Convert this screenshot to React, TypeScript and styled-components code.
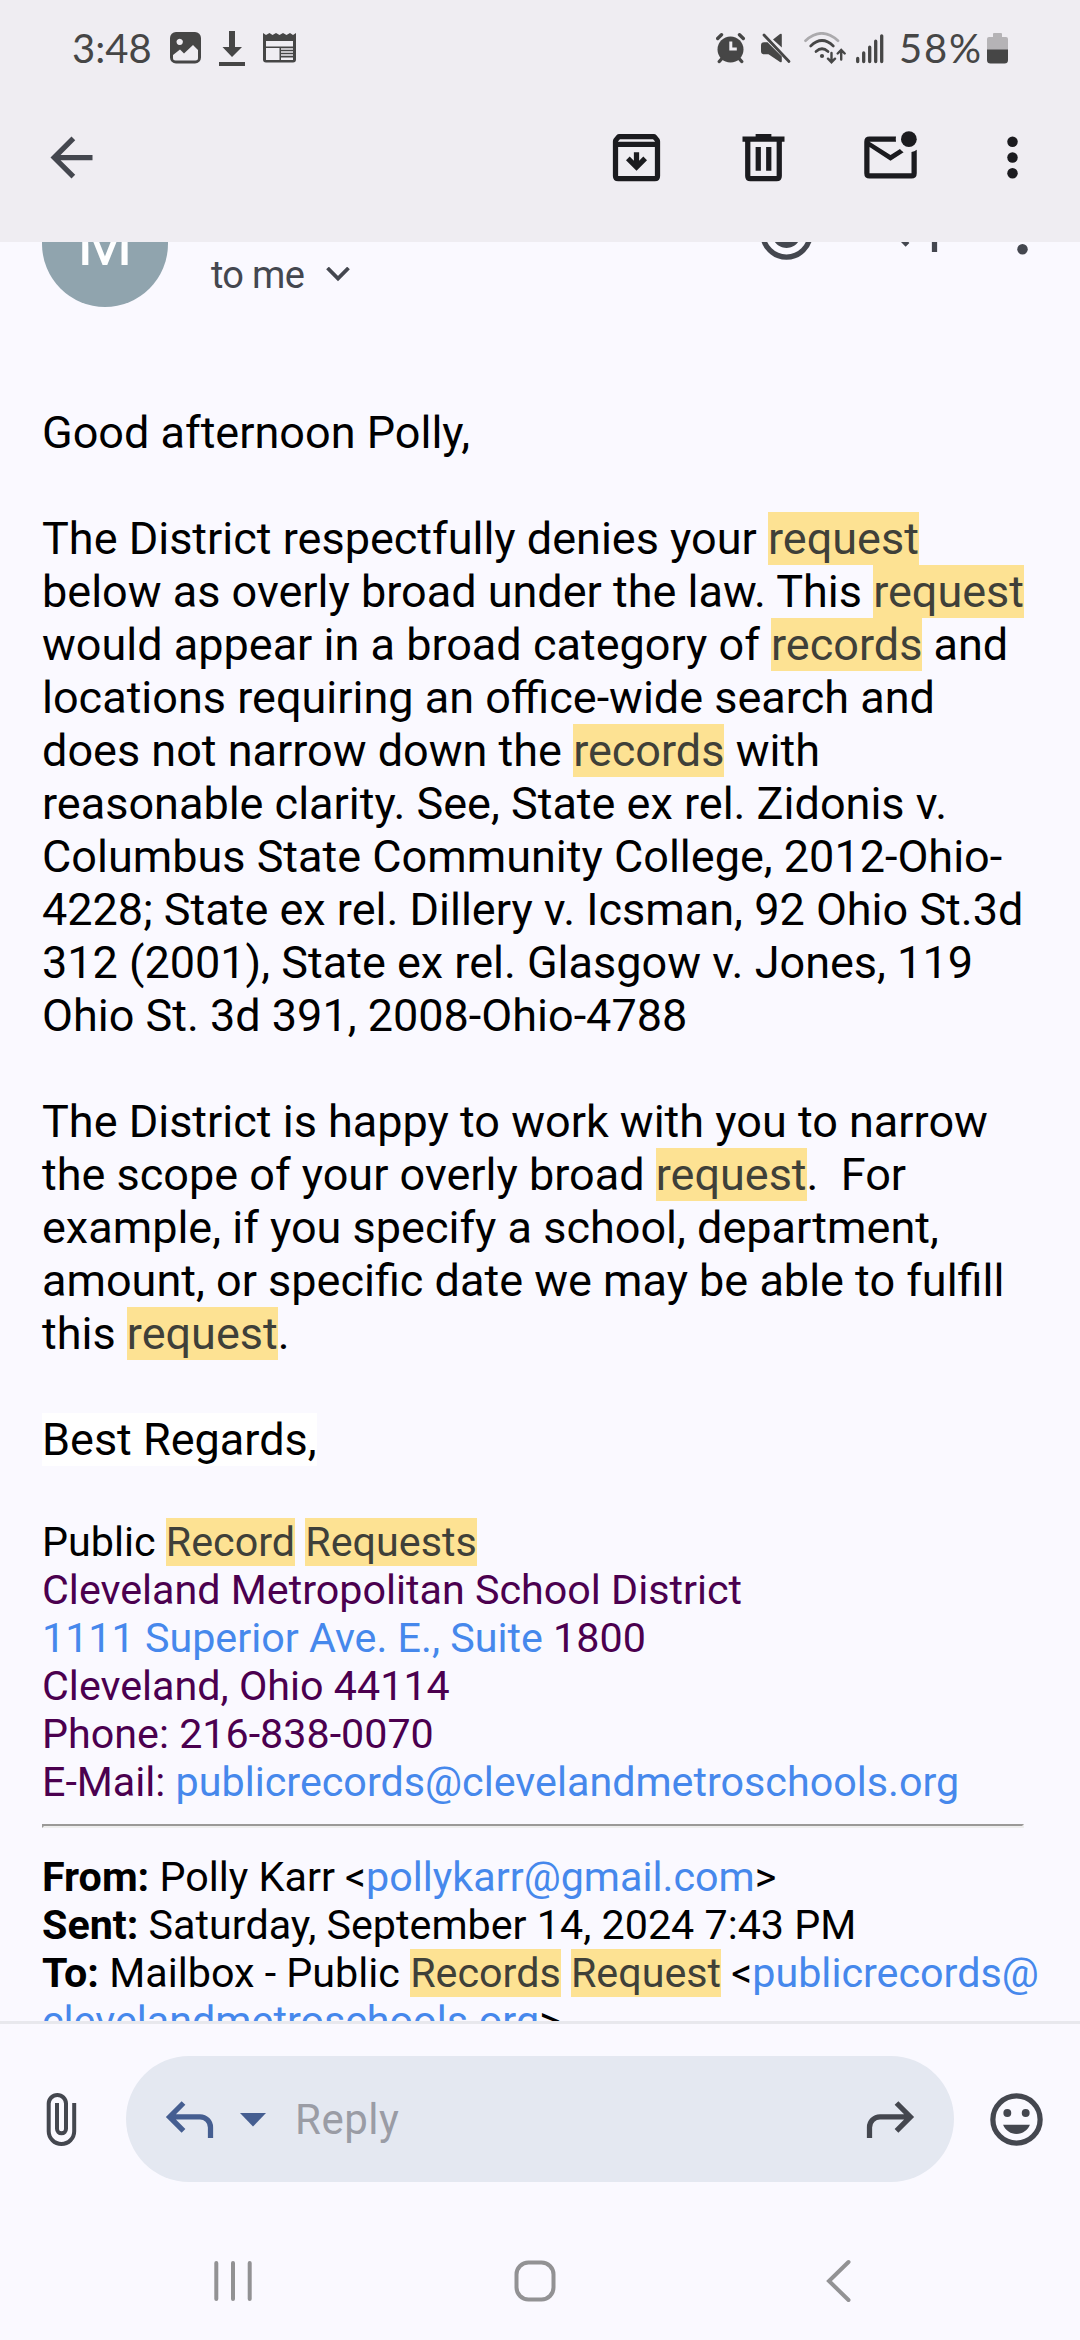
import React from "react";
import styled, { createGlobalStyle } from "styled-components";

const GlobalStyle = createGlobalStyle`
  * { box-sizing: border-box; }
  body { margin: 0; background: #faf9ff; font-family: Roboto, "Noto Sans", sans-serif; }
`;

const Screen = styled.main`
  width: 1080px;
  height: 2340px;
  display: flex;
  flex-direction: column;
  overflow: hidden;
  background: #faf9ff;
`;

const Header = styled.header`
  height: 242px;
  flex: none;
  background: #efedf2;
`;

const StatusBar = styled.div`
  height: 96px;
  padding: 0 72px;
  display: flex;
  justify-content: space-between;
  align-items: center;
  color: #464646;
`;

const StatusGroup = styled.div<{ $gap: number }>`
  display: flex;
  align-items: center;
  gap: ${(p) => p.$gap}px;
`;

const StatusIcon = styled.svg<{ $left?: number }>`
  display: block;
  margin-left: ${(p) => p.$left ?? 0}px;
`;

const StatusText = styled.span<{ $width: number; $spacing?: number }>`
  width: ${(p) => p.$width}px;
  font-family: Lato, Roboto, sans-serif;
  font-size: 40px;
  line-height: 48px;
  letter-spacing: ${(p) => p.$spacing ?? 0}px;
  white-space: nowrap;
`;

const Toolbar = styled.div`
  height: 122px;
  padding: 0 36px 0 40px;
  display: flex;
  align-items: center;
  color: #1b1b1f;
`;

const IconButton = styled.button<{ $left?: number; $color?: string }>`
  flex: none;
  width: 63px;
  height: 63px;
  margin: 0 0 0 ${(p) => p.$left ?? 0}px;
  padding: 0;
  border: 0;
  background: none;
  color: ${(p) => p.$color ?? "inherit"};
  svg { display: block; width: 63px; height: 63px; }
`;

const Spacer = styled.div`
  flex: 1;
`;

const Message = styled.article`
  height: 1779px;
  flex: none;
  overflow: hidden;
`;

const SenderRow = styled.div`
  display: flex;
  height: 126px;
  margin-top: -61px;
  padding: 0 26px 0 42px;
  color: #44474f;
`;

const Avatar = styled.div`
  width: 126px;
  height: 126px;
  border-radius: 50%;
  background: #90a4ae;
  color: #fff;
  font-size: 64px;
  line-height: 125px;
  text-align: center;
`;

const Recipient = styled.div`
  display: flex;
  align-items: center;
  gap: 22px;
  height: 44px;
  margin: 72px 0 0 43px;
  font-size: 38px;
  line-height: 44px;
  letter-spacing: -0.7px;
`;

const SenderActions = styled.div`
  display: flex;
  margin-top: 21px;
`;

const Body = styled.div`
  padding: 99px 42px 0;
  color: #000;
`;

const Copy = styled.p`
  margin: 0 0 53px;
  font-size: 45px;
  line-height: 53px;
  white-space: pre;
`;

const SmallCopy = styled(Copy)`
  margin: -1px 0 0;
  font-size: 41.25px;
  line-height: 48px;
`;

const Mark = styled.mark`
  background: #fde293;
  color: #3f4039;
`;

const WhiteFill = styled.span`
  background: #fff;
`;

const Purple = styled.span`
  color: #4b004f;
`;

const Link = styled.a`
  color: #4688ec;
`;

const Rule = styled.hr`
  width: 982px;
  height: 4px;
  margin: 18px 0 26px;
  border: 2px solid;
  border-color: #9a9998 #eeeeee #eeeeee #9a9998;
`;

const ReplyBar = styled.div`
  height: 188px;
  padding: 32px 32px 0 30px;
  flex: none;
  display: flex;
  align-items: flex-start;
  border-top: 3px solid #e8e8ed;
  color: #44474f;
`;

const ReplySide = styled.div<{ $left?: number }>`
  height: 126px;
  display: flex;
  align-items: center;
  margin-left: ${(p) => p.$left ?? 0}px;
`;

const ReplyPill = styled.div`
  width: 828px;
  height: 126px;
  margin-left: 33px;
  padding: 0 32px;
  display: flex;
  align-items: center;
  border-radius: 63px;
  background: #e4e8f1;
`;

const Caret = styled.svg`
  margin: 1px 0 0 19px;
  display: block;
`;

const Placeholder = styled.span`
  margin: 1px 0 0 29px;
  font-size: 42px;
  line-height: 50px;
  letter-spacing: 0.5px;
  color: #9a9ca5;
`;

const NavBar = styled.nav`
  flex: 1;
  display: grid;
  grid-template-columns: 301px 312px auto;
  align-items: start;
  padding: 48px 0 0 213px;
  svg { display: block; }
`;

const Dots = () => (
  <svg viewBox="0 0 24 24" fill="currentColor">
    <circle cx="12" cy="6" r="2" />
    <circle cx="12" cy="12" r="2" />
    <circle cx="12" cy="18" r="2" />
  </svg>
);

const Smile = () => (
  <svg viewBox="0 0 24 24" fill="currentColor">
    <circle cx="12" cy="12" r="9" fill="none" stroke="currentColor" strokeWidth="2" />
    <circle cx="8.5" cy="9.5" r="1.5" />
    <circle cx="15.5" cy="9.5" r="1.5" />
    <path d="M12 17.5c2.33 0 4.31-1.46 5.11-3.5H6.89c.8 2.04 2.78 3.5 5.11 3.5z" />
  </svg>
);

const ReplyArrow = ({ flip }: { flip?: boolean }) => (
  <svg viewBox="0 0 24 24" fill="currentColor">
    <path
      transform={flip ? "translate(24 0) scale(-1 1)" : undefined}
      d="M19 19v-4q0-1.25-.875-2.125T16 12H6.825l3.6 3.6L9 17l-6-6 6-6 1.425 1.4L6.825 10H16q2.075 0 3.538 1.463T21 15v4z"
    />
  </svg>
);

export default function App() {
  return (
    <Screen>
      <GlobalStyle />
      <Header>
        <StatusBar>
          <StatusGroup $gap={18}>
            <StatusText $width={80}>3:48</StatusText>
            <StatusIcon width="31" height="32" viewBox="0 0 31 32">
              <path fill="currentColor" fillRule="evenodd" d="M6 0h19a6 6 0 0 1 6 6v19.500a6 6 0 0 1-6 6H6a6 6 0 0 1-6-6V6a6 6 0 0 1 6-6zM3 23v3q0 2.500 2.500 2.500h20q2.500 0 2.500-2.500v-8l-5-5-9 8.500-4-4zM9.700 6.700a3.200 3.200 0 1 0 .01 0z" />
            </StatusIcon>
            <StatusIcon width="26" height="35" viewBox="0 0 26 35" fill="currentColor">
              <path d="M10 0h6v16h7L13 26 3.500 16H10zM0 31h26v4H0z" />
            </StatusIcon>
            <StatusIcon width="33" height="30" viewBox="0 0 33 30">
              <path fill="currentColor" fillRule="evenodd" d="M0 0l3 2 3.500-2L9.500 2l3.500-2 3.500 2L20 0l3.500 2L27 0l3 2 3-2v26.500q0 3-3 3H3q-3 0-3-3zM3 8v5.500h27V8zM3 15v12h13.500V15zM18 15.200v1.600h12v-1.600zM18 18.200v1.600h12v-1.600zM18 21.200v1.600h12v-1.600zM18 24.500v2.500h12v-2.500z" />
            </StatusIcon>
          </StatusGroup>
          <StatusGroup $gap={15}>
            <StatusIcon width="30" height="31" viewBox="0 0 30 31">
              <circle cx="14.500" cy="16.500" r="13" fill="currentColor" />
              <path d="M1.700 5.500L5.500 1.800M27.300 5.500L23.500 1.800M5.500 26l-2.200 2.500M23.500 26l2.200 2.500" stroke="currentColor" strokeWidth="3.400" strokeLinecap="round" />
              <path d="M14.800 8.500v7.500h6" fill="none" stroke="#efedf2" strokeWidth="3" />
            </StatusIcon>
            <StatusIcon width="30" height="31" viewBox="0 0 30 31">
              <path fill="currentColor" d="M12 6.500L19 1q1.800-1 1.800.8v12.700zM0 12.500q0-3.300 3-3.300h3.500L20.800 23.500V28q0 2-1.800 1L7.500 21.300H3q-3 0-3-3z" />
              <path d="M3 2L28 28.500" stroke="currentColor" strokeWidth="2.800" strokeLinecap="round" />
            </StatusIcon>
            <StatusIcon $left={-2} width="42" height="32" viewBox="0 0 42 32" fill="none" stroke="currentColor" strokeWidth="2.700" strokeLinecap="round">
              <path d="M1.500 8.700Q17.700-6 34 8.700" opacity=".4" />
              <path d="M6.700 14q11.300-11 22.600 0M12 19.500q6-5.500 12 0" />
              <circle cx="18" cy="24" r="2.100" fill="currentColor" stroke="none" />
              <path d="M27.500 21v9M24 26.700l3.500 3.500 3.500-3.500M37.200 27.500v-9M33.700 21.500l3.500-3.500 3.500 3.500" strokeWidth="2.400" />
            </StatusIcon>
            <StatusIcon $left={-5} width="28" height="31" viewBox="0 0 28 31" stroke="currentColor" strokeWidth="3.300" strokeLinecap="round">
              <path d="M1.700 25v3M7.700 19.500v8.500M13.700 13.700v14.300M19.700 7.700v20.300M25.700 2.300v25.700" transform="translate(0 .5)" />
            </StatusIcon>
            <StatusText $width={73} $spacing={1.8}>58%</StatusText>
            <StatusIcon width="21" height="31" viewBox="0 0 21 31">
              <path fill="#b5b3b6" d="M6 1q0-1 1-1h7q1 0 1 1v3h4q2 0 2 2v11H0V6q0-2 2-2h4z" />
              <path fill="currentColor" d="M0 16.500h21V27q0 3.500-3.500 3.500h-14Q0 30.500 0 27z" />
            </StatusIcon>
          </StatusGroup>
        </StatusBar>
        <Toolbar>
          <IconButton $color="#44474f" aria-label="Back">
            <svg viewBox="0 0 24 24" fill="currentColor"><path d="M20 11H7.830l5.590-5.590L12 4l-8 8 8 8 1.410-1.410L7.830 13H20z" /></svg>
          </IconButton>
          <Spacer />
          <IconButton aria-label="Archive">
            <svg viewBox="0 0 24 24" fill="currentColor">
              <path fillRule="evenodd" d="M5.400 3h13.200q.6 0 1 .5L20.700 4.900q.3.400.3 1V19q0 2-2 2H5q-2 0-2-2V5.900q0-.6.300-1L4.400 3.500q.4-.5 1-.5zM5.700 5l-.7.850V6h14v-.150L18.300 5zM5 8v11h14V8z" />
              <path d="M11 10h2v3.200l1.600-1.600L16 13l-4 4-4-4 1.400-1.400 1.600 1.600z" />
            </svg>
          </IconButton>
          <IconButton $left={64} aria-label="Delete">
            <svg viewBox="0 0 24 24" fill="currentColor">
              <path fillRule="evenodd" d="M9 3h6v1h5v2h-1v13q0 2-2 2H7q-2 0-2-2V6H4V4h5zM7 6v13h10V6zM9 8h2v9H9zM13 8h2v9h-2z" />
            </svg>
          </IconButton>
          <IconButton $left={64} aria-label="Mark unread">
            <svg viewBox="0 0 24 24" fill="currentColor">
              <circle cx="19" cy="5" r="3" />
              <path d="M22 9.500V18q0 2-2 2H4q-2 0-2-2V6q0-2 2-2h10.100q-.2 1 0 2H4l8 5 3.600-2.250q.6.700 1.400 1.250l-5 3.200L4 8v10h16v-8.100q1.100-.2 2-.9z" />
            </svg>
          </IconButton>
          <IconButton $left={59} aria-label="More"><Dots /></IconButton>
        </Toolbar>
      </Header>

      <Message>
        <SenderRow>
          <Avatar>M</Avatar>
          <Recipient>
            to me
            <svg width="24" height="16" viewBox="0 0 24 16"><path d="M1.500 1L12 11.500 22.500 1" fill="none" stroke="currentColor" strokeWidth="3.800" /></svg>
          </Recipient>
          <Spacer />
          <SenderActions>
            <IconButton aria-label="React"><Smile /></IconButton>
            <IconButton $left={64} aria-label="Reply"><ReplyArrow /></IconButton>
            <IconButton $left={46} aria-label="Message options"><Dots /></IconButton>
          </SenderActions>
        </SenderRow>
        <Body>
          <Copy>Good afternoon Polly,</Copy>
          <Copy>
            The District respectfully denies your <Mark>request</Mark>{"\n"}
            below as overly broad under the law. This <Mark>request</Mark>{"\n"}
            would appear in a broad category of <Mark>records</Mark> and{"\n"}
            locations requiring an office-wide search and{"\n"}
            does not narrow down the <Mark>records</Mark> with{"\n"}
            reasonable clarity. See, State ex rel. Zidonis v.{"\n"}
            Columbus State Community College, 2012-Ohio-{"\n"}
            4228; State ex rel. Dillery v. Icsman, 92 Ohio St.3d{"\n"}
            312 (2001), State ex rel. Glasgow v. Jones, 119{"\n"}
            Ohio St. 3d 391, 2008-Ohio-4788
          </Copy>
          <Copy>
            The District is happy to work with you to narrow{"\n"}
            the scope of your overly broad <Mark>request</Mark>.{"  "}For{"\n"}
            example, if you specify a school, department,{"\n"}
            amount, or specific date we may be able to fulfill{"\n"}
            this <Mark>request</Mark>.
          </Copy>
          <Copy><WhiteFill>Best Regards,</WhiteFill></Copy>
          <SmallCopy>
            Public <Mark>Record</Mark> <Mark>Requests</Mark>{"\n"}
            <Purple>Cleveland Metropolitan School District</Purple>{"\n"}
            <Link>1111 Superior Ave. E., Suite</Link><Purple> 1800</Purple>{"\n"}
            <Purple>Cleveland, Ohio 44114</Purple>{"\n"}
            <Purple>Phone: 216-838-0070</Purple>{"\n"}
            <Purple>E-Mail: </Purple><Link>publicrecords@clevelandmetroschools.org</Link>
          </SmallCopy>
          <Rule />
          <SmallCopy>
            <b>From:</b> Polly Karr &lt;<Link>pollykarr@gmail.com</Link>&gt;{"\n"}
            <b>Sent:</b> Saturday, September 14, 2024 7:43 PM{"\n"}
            <b>To:</b> Mailbox - Public <Mark>Records</Mark> <Mark>Request</Mark> &lt;<Link>publicrecords@{"\n"}clevelandmetroschools.org</Link>&gt;
          </SmallCopy>
        </Body>
      </Message>

      <ReplyBar>
        <ReplySide>
          <IconButton aria-label="Attach">
            <svg viewBox="0 0 63 63" fill="none" stroke="currentColor" strokeWidth="4">
              <path d="M27 15v25.800a4.500 4.500 0 0 0 9 0V15.600a8.650 8.650 0 0 0-17.300 0v27.600a12.750 12.750 0 0 0 25.500 0V15" />
            </svg>
          </IconButton>
        </ReplySide>
        <ReplyPill>
          <IconButton $color="#455e91" aria-label="Reply"><ReplyArrow /></IconButton>
          <Caret width="26" height="14" viewBox="0 0 26 14"><path d="M0 0h26L13 13.500z" fill="#455e91" /></Caret>
          <Placeholder>Reply</Placeholder>
          <Spacer />
          <IconButton aria-label="Forward"><ReplyArrow flip /></IconButton>
        </ReplyPill>
        <ReplySide $left={31}>
          <IconButton aria-label="Emoji"><Smile /></IconButton>
        </ReplySide>
      </ReplyBar>

      <NavBar>
        <svg width="40" height="48" viewBox="0 0 40 48" stroke="#929294" strokeWidth="4" strokeLinecap="round">
          <path d="M3.300 6v36M20 6v36M36.700 6v36" />
        </svg>
        <svg width="42" height="48" viewBox="0 0 42 48" fill="none" stroke="#929294" strokeWidth="4">
          <rect x="2.500" y="5.500" width="37" height="37" rx="12" />
        </svg>
        <svg width="25" height="48" viewBox="0 0 25 48" fill="none" stroke="#929294" strokeWidth="4" strokeLinecap="round">
          <path d="M22.500 5L3 24l19.500 19" />
        </svg>
      </NavBar>
    </Screen>
  );
}
